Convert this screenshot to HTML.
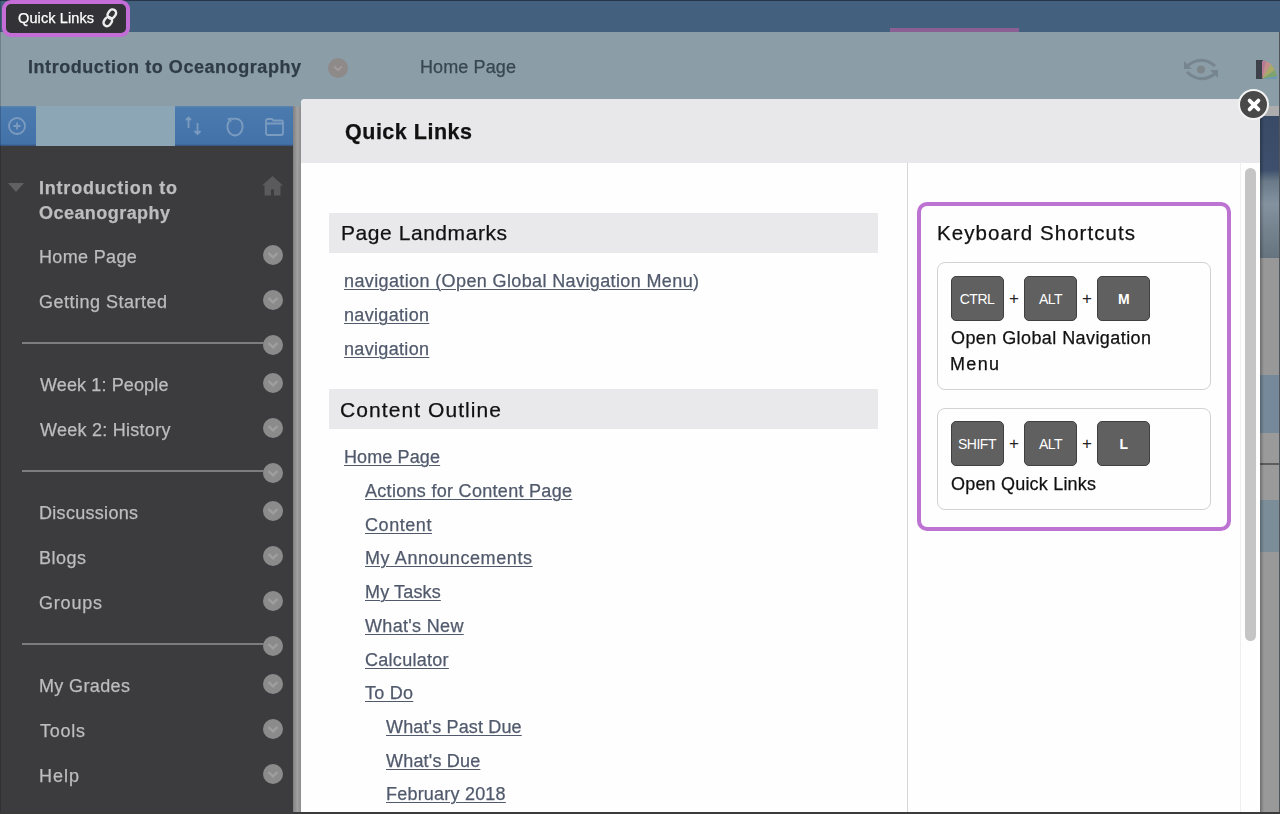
<!DOCTYPE html>
<html><head><meta charset="utf-8">
<style>
html,body{margin:0;padding:0;}
body{width:1280px;height:814px;overflow:hidden;position:relative;background:#8a9ba5;font-family:"Liberation Sans",sans-serif;}
.a{position:absolute;}
.t{position:absolute;white-space:nowrap;line-height:1;-webkit-text-stroke:0.25px currentColor;will-change:transform;}
.circ{position:absolute;width:20px;height:20px;border-radius:50%;background:#8b8b8b;}
.circ svg{position:absolute;left:0;top:0;}
.sep{position:absolute;left:22px;width:242px;height:2px;background:#7d7c7e;}
.key{position:absolute;width:51px;height:43px;background:#606060;border:1px solid #404040;border-radius:5px;color:#fff;font-size:14px;line-height:45px;text-align:center;letter-spacing:-0.5px;}
.plus{position:absolute;font-size:17px;color:#222;line-height:1;}
</style></head><body>
<!-- top bar -->
<div class="a" style="left:0;top:0;width:1280px;height:32px;background:#44607f;"></div>
<div class="a" style="left:0;top:0;width:1280px;height:1px;background:#26344a;"></div>
<div class="a" style="left:890px;top:28px;width:129px;height:4px;background:#8a5f93;"></div>
<!-- header -->
<div class="a" style="left:0;top:32px;width:1280px;height:74px;background:#8b9da7;"></div>
<!-- quick links button -->
<div class="a" style="left:2px;top:-0.5px;width:119.5px;height:29px;border:4.5px solid #c46dd6;border-radius:9px;background:#333236;"></div>
<svg class="a" style="left:100px;top:7px" width="20" height="22" viewBox="0 0 20 22">
  <g fill="none" stroke="#ececec" stroke-width="2.4">
    <rect x="8.2" y="2.2" width="7.2" height="9.6" rx="3.6" transform="rotate(35 11.8 7)"/>
    <rect x="4.2" y="9.8" width="7.2" height="9.6" rx="3.6" transform="rotate(35 7.8 14.6)"/>
  </g>
</svg>
<!-- header chevron -->
<div class="circ" style="left:328px;top:58px;background:#8f8a8a;filter:blur(0.6px);"><svg width="20" height="20" viewBox="0 0 20 20"><path d="M6 8.5 L10 12 L14 8.5" fill="none" stroke="#a29c9a" stroke-width="2"/></svg></div>
<!-- eye icon -->
<svg class="a" style="left:1183px;top:56px" width="36" height="27" viewBox="0 0 36 27">
  <g fill="none" stroke="#76858e" stroke-width="3">
    <path d="M3 11 Q18 -2 32 10"/>
    <path d="M4 16 Q18 29 33 17"/>
  </g>
  <path d="M1 5 L1 13 L9 13 Z" fill="#76858e"/>
  <path d="M35 22 L35 14 L27 14 Z" fill="#76858e"/>
  <circle cx="18" cy="13.5" r="4" fill="#7d878b"/>
</svg>
<!-- palette icon -->
<div class="a" style="left:1256px;top:60px;width:7px;height:19px;background:#3d424a;"></div>
<svg class="a" style="left:1262px;top:60px" width="16" height="19" viewBox="0 0 16 19">
  <path d="M0 19 L0 1 L4 1 Z" fill="#b77a92"/>
  <path d="M0 19 L4 1 L9 4 Z" fill="#c48f8a"/>
  <path d="M0 19 L9 4 L13 10 Z" fill="#a9a968"/>
  <path d="M0 19 L13 10 L15 16 Z" fill="#7fa36f"/>
  <path d="M0 19 L15 16 L15 19 Z" fill="#6e97b2"/>
</svg>
<!-- right strip -->
<div class="a" style="left:1260px;top:106px;width:20px;height:10px;background:#adadad;"></div>
<div class="a" style="left:1260px;top:116px;width:20px;height:142px;background:linear-gradient(#394a66,#3d4f6c 38%,#6a7a89 46%,#8492a0 62%,#75838f 80%,#65747f);"></div>
<div class="a" style="left:1260px;top:258px;width:20px;height:117px;background:#999899;"></div>
<div class="a" style="left:1260px;top:375px;width:20px;height:58px;background:#76899a;"></div>
<div class="a" style="left:1260px;top:433px;width:20px;height:67px;background:#9b9a9b;"></div>
<div class="a" style="left:1260px;top:463px;width:20px;height:1.5px;background:#5d5d5d;"></div>
<div class="a" style="left:1260px;top:500px;width:20px;height:52px;background:#7a8d99;"></div>
<div class="a" style="left:1260px;top:552px;width:20px;height:262px;background:#9a999a;"></div>
<div class="a" style="left:1260px;top:116px;width:4px;height:698px;background:linear-gradient(90deg,rgba(0,0,0,0.28),rgba(0,0,0,0));"></div>
<div class="a" style="left:1278.5px;top:32px;width:1.5px;height:782px;background:#50555b;"></div>
<!-- sidebar toolbar -->
<div class="a" style="left:0;top:106px;width:293px;height:40px;background:linear-gradient(#5f86b0 0,#4b7aaf 2px,#4372a9 38px,#34507a 40px);"></div>
<div class="a" style="left:36px;top:106px;width:139px;height:40px;background:#8ca6b5;"></div>
<svg class="a" style="left:6px;top:115px;filter:blur(0.6px)" width="22" height="22" viewBox="0 0 22 22">
  <circle cx="11" cy="11" r="8" fill="none" stroke="#7b9bbf" stroke-width="1.8"/>
  <path d="M11 7.5 V14.5 M7.5 11 H14.5" stroke="#7b9bbf" stroke-width="1.8"/>
</svg>
<svg class="a" style="left:184px;top:115px;filter:blur(0.6px)" width="20" height="22" viewBox="0 0 20 22">
  <g fill="none" stroke="#7b9bbf" stroke-width="1.8">
    <path d="M4.5 13 V2.5 M2 5 L4.5 2.5 L7 5"/>
    <path d="M13.5 8 V19 M10.5 16 L13.5 19 L16.5 16"/>
  </g>
</svg>
<svg class="a" style="left:224px;top:116px;filter:blur(0.6px)" width="22" height="22" viewBox="0 0 22 22">
  <path d="M5 5 Q3 9 3.5 12 Q5 19 11 19.5 Q17 19 18.5 12 Q19 6 15 3.5 Q11 2 8 3" fill="none" stroke="#7b9bbf" stroke-width="1.9"/>
  <path d="M3 2.5 L8 1.5 L7 6.5 Z" fill="#7b9bbf"/>
</svg>
<svg class="a" style="left:263px;top:116px;filter:blur(0.6px)" width="22" height="22" viewBox="0 0 22 22">
  <path d="M3 5 Q3 3 5 3 H9 L10.5 4.5 H18 Q20 4.5 20 6.5 V17 Q20 19 18 19 H5 Q3 19 3 17 Z M3 7.5 H20" fill="none" stroke="#7b9bbf" stroke-width="1.8"/>
</svg>
<!-- sidebar -->
<div class="a" style="left:0;top:146px;width:293px;height:668px;background:#3c3b3e;"></div>
<div class="a" style="left:293px;top:106px;width:8px;height:708px;background:linear-gradient(90deg,#828182,#a2a1a2 55%,#8c8b8c);"></div>
<svg class="a" style="left:8px;top:183px" width="16" height="9" viewBox="0 0 16 9"><path d="M0 0 H16 L8 9 Z" fill="#616063"/></svg>
<svg class="a" style="left:261px;top:175px;filter:blur(0.4px)" width="23" height="22" viewBox="0 0 23 22"><path d="M11.5 1 L22 10.5 H19.5 V20.5 H13 V14.5 H10 V20.5 H3.5 V10.5 H1 Z" fill="#5a595c"/></svg>
<div class="circ" style="left:263px;top:245px;"><svg width="20" height="20" viewBox="0 0 20 20"><path d="M5.5 8 L10 12.3 L14.5 8" fill="none" stroke="#9f9f9f" stroke-width="2.3"/></svg></div>
<div class="circ" style="left:263px;top:290px;"><svg width="20" height="20" viewBox="0 0 20 20"><path d="M5.5 8 L10 12.3 L14.5 8" fill="none" stroke="#9f9f9f" stroke-width="2.3"/></svg></div>
<div class="circ" style="left:263px;top:335px;"><svg width="20" height="20" viewBox="0 0 20 20"><path d="M5.5 8 L10 12.3 L14.5 8" fill="none" stroke="#9f9f9f" stroke-width="2.3"/></svg></div>
<div class="circ" style="left:263px;top:373px;"><svg width="20" height="20" viewBox="0 0 20 20"><path d="M5.5 8 L10 12.3 L14.5 8" fill="none" stroke="#9f9f9f" stroke-width="2.3"/></svg></div>
<div class="circ" style="left:263px;top:418px;"><svg width="20" height="20" viewBox="0 0 20 20"><path d="M5.5 8 L10 12.3 L14.5 8" fill="none" stroke="#9f9f9f" stroke-width="2.3"/></svg></div>
<div class="circ" style="left:263px;top:463px;"><svg width="20" height="20" viewBox="0 0 20 20"><path d="M5.5 8 L10 12.3 L14.5 8" fill="none" stroke="#9f9f9f" stroke-width="2.3"/></svg></div>
<div class="circ" style="left:263px;top:501px;"><svg width="20" height="20" viewBox="0 0 20 20"><path d="M5.5 8 L10 12.3 L14.5 8" fill="none" stroke="#9f9f9f" stroke-width="2.3"/></svg></div>
<div class="circ" style="left:263px;top:546px;"><svg width="20" height="20" viewBox="0 0 20 20"><path d="M5.5 8 L10 12.3 L14.5 8" fill="none" stroke="#9f9f9f" stroke-width="2.3"/></svg></div>
<div class="circ" style="left:263px;top:591px;"><svg width="20" height="20" viewBox="0 0 20 20"><path d="M5.5 8 L10 12.3 L14.5 8" fill="none" stroke="#9f9f9f" stroke-width="2.3"/></svg></div>
<div class="circ" style="left:263px;top:636px;"><svg width="20" height="20" viewBox="0 0 20 20"><path d="M5.5 8 L10 12.3 L14.5 8" fill="none" stroke="#9f9f9f" stroke-width="2.3"/></svg></div>
<div class="circ" style="left:263px;top:674px;"><svg width="20" height="20" viewBox="0 0 20 20"><path d="M5.5 8 L10 12.3 L14.5 8" fill="none" stroke="#9f9f9f" stroke-width="2.3"/></svg></div>
<div class="circ" style="left:263px;top:719px;"><svg width="20" height="20" viewBox="0 0 20 20"><path d="M5.5 8 L10 12.3 L14.5 8" fill="none" stroke="#9f9f9f" stroke-width="2.3"/></svg></div>
<div class="circ" style="left:263px;top:764px;"><svg width="20" height="20" viewBox="0 0 20 20"><path d="M5.5 8 L10 12.3 L14.5 8" fill="none" stroke="#9f9f9f" stroke-width="2.3"/></svg></div>
<div class="sep" style="top:342px;"></div>
<div class="sep" style="top:470px;"></div>
<div class="sep" style="top:643px;"></div>
<!-- modal -->
<div class="a" style="left:301px;top:98.5px;width:959px;height:716px;background:#fefefe;border-radius:4px 4px 0 0;overflow:hidden;">
  <div class="a" style="left:0;top:0;width:959px;height:64.3px;background:#e8e7e9;"></div>
</div>
<div class="a" style="left:329px;top:213px;width:549px;height:40px;background:#e9e8ea;"></div>
<div class="a" style="left:329px;top:389px;width:549px;height:40px;background:#e9e8ea;"></div>
<div class="a" style="left:907px;top:162.8px;width:1px;height:652px;background:#d6d6d6;"></div>
<div class="a" style="left:1240px;top:162px;width:1px;height:652px;background:#efefef;"></div>
<div class="a" style="left:1245px;top:168px;width:11px;height:473px;background:#c6c5c6;border-radius:6px;"></div>
<!-- keyboard box -->
<div class="a" style="left:917px;top:202px;width:305.5px;height:321px;border:4.5px solid #bd73d2;border-radius:10px;"></div>
<div class="a" style="left:937px;top:262px;width:272px;height:126px;border:1px solid #d2d2d2;border-radius:8px;"></div>
<div class="a" style="left:937px;top:407.5px;width:272px;height:100.5px;border:1px solid #d2d2d2;border-radius:8px;"></div>
<div class="key" style="left:950.5px;top:276px;">CTRL</div>
<div class="key" style="left:1024px;top:276px;">ALT</div>
<div class="key" style="left:1097px;top:276px;font-weight:bold;">M</div>
<div class="plus" style="left:1009px;top:290px;">+</div>
<div class="plus" style="left:1082px;top:290px;">+</div>
<div class="key" style="left:950.5px;top:421px;">SHIFT</div>
<div class="key" style="left:1024px;top:421px;">ALT</div>
<div class="key" style="left:1097px;top:421px;font-weight:bold;">L</div>
<div class="plus" style="left:1009px;top:435px;">+</div>
<div class="plus" style="left:1082px;top:435px;">+</div>
<!-- close -->
<div class="a" style="left:1238px;top:89px;width:27px;height:27px;border:2.5px solid #f4f4f4;border-radius:50%;background:#4a494a;"></div>
<svg class="a" style="left:1244.5px;top:96px" width="18" height="18" viewBox="0 0 18 18"><path d="M4.6 4.6 L13.4 13.4 M13.4 4.6 L4.6 13.4" stroke="#fff" stroke-width="3.8" stroke-linecap="round"/></svg>
<div class="a" style="left:0;top:0;width:1px;height:814px;background:rgba(0,0,0,0.18);"></div>
<!-- bottom line -->
<div class="a" style="left:0;top:812px;width:1280px;height:2px;background:#3b3b3b;"></div>
<div class="t" style="left:18.00px;top:11.23px;font-size:14.5px;font-weight:normal;color:#ffffff;letter-spacing:0.106px;">Quick Links</div>
<div class="t" style="left:28.00px;top:57.76px;font-size:18px;font-weight:bold;color:#2f3c48;letter-spacing:0.555px;">Introduction to Oceanography</div>
<div class="t" style="left:420.00px;top:57.76px;font-size:18px;font-weight:normal;color:#37464f;letter-spacing:0.118px;">Home Page</div>
<div class="t" style="left:345.00px;top:121.50px;font-size:21.5px;font-weight:bold;color:#111111;letter-spacing:0.513px;">Quick Links</div>
<div class="t" style="left:341.00px;top:222.22px;font-size:21px;font-weight:normal;color:#111111;letter-spacing:0.557px;">Page Landmarks</div>
<div class="t" style="left:344.00px;top:271.56px;font-size:18px;font-weight:normal;color:#515a6c;letter-spacing:0.380px;"><span style="text-decoration:underline;text-underline-offset:2px;text-decoration-thickness:1px;">navigation (Open Global Navigation Menu</span>)</div>
<div class="t" style="left:344.00px;top:305.76px;font-size:18px;font-weight:normal;color:#515a6c;letter-spacing:0.326px;text-decoration:underline;text-underline-offset:2px;text-decoration-thickness:1px;">navigation</div>
<div class="t" style="left:344.00px;top:339.96px;font-size:18px;font-weight:normal;color:#515a6c;letter-spacing:0.326px;text-decoration:underline;text-underline-offset:2px;text-decoration-thickness:1px;">navigation</div>
<div class="t" style="left:340.00px;top:399.02px;font-size:21px;font-weight:normal;color:#111111;letter-spacing:1.077px;">Content Outline</div>
<div class="t" style="left:344.00px;top:448.36px;font-size:18px;font-weight:normal;color:#515a6c;letter-spacing:0.118px;text-decoration:underline;text-underline-offset:2px;text-decoration-thickness:1px;">Home Page</div>
<div class="t" style="left:365.00px;top:482.07px;font-size:18px;font-weight:normal;color:#515a6c;letter-spacing:0.299px;text-decoration:underline;text-underline-offset:2px;text-decoration-thickness:1px;">Actions for Content Page</div>
<div class="t" style="left:365.00px;top:515.78px;font-size:18px;font-weight:normal;color:#515a6c;letter-spacing:0.559px;text-decoration:underline;text-underline-offset:2px;text-decoration-thickness:1px;">Content</div>
<div class="t" style="left:365.00px;top:549.49px;font-size:18px;font-weight:normal;color:#515a6c;letter-spacing:0.595px;text-decoration:underline;text-underline-offset:2px;text-decoration-thickness:1px;">My Announcements</div>
<div class="t" style="left:365.00px;top:583.20px;font-size:18px;font-weight:normal;color:#515a6c;letter-spacing:0.142px;text-decoration:underline;text-underline-offset:2px;text-decoration-thickness:1px;">My Tasks</div>
<div class="t" style="left:365.00px;top:616.91px;font-size:18px;font-weight:normal;color:#515a6c;letter-spacing:0.327px;text-decoration:underline;text-underline-offset:2px;text-decoration-thickness:1px;">What's New</div>
<div class="t" style="left:365.00px;top:650.62px;font-size:18px;font-weight:normal;color:#515a6c;letter-spacing:0.285px;text-decoration:underline;text-underline-offset:2px;text-decoration-thickness:1px;">Calculator</div>
<div class="t" style="left:365.00px;top:684.33px;font-size:18px;font-weight:normal;color:#515a6c;letter-spacing:0.245px;text-decoration:underline;text-underline-offset:2px;text-decoration-thickness:1px;">To Do</div>
<div class="t" style="left:385.80px;top:718.04px;font-size:18px;font-weight:normal;color:#515a6c;letter-spacing:0.151px;text-decoration:underline;text-underline-offset:2px;text-decoration-thickness:1px;">What's Past Due</div>
<div class="t" style="left:385.80px;top:751.75px;font-size:18px;font-weight:normal;color:#515a6c;letter-spacing:0.192px;text-decoration:underline;text-underline-offset:2px;text-decoration-thickness:1px;">What's Due</div>
<div class="t" style="left:385.80px;top:785.46px;font-size:18px;font-weight:normal;color:#515a6c;letter-spacing:0.211px;text-decoration:underline;text-underline-offset:2px;text-decoration-thickness:1px;">February 2018</div>
<div class="t" style="left:936.80px;top:222.65px;font-size:20.5px;font-weight:normal;color:#111111;letter-spacing:1.056px;">Keyboard Shortcuts</div>
<div class="t" style="left:951.00px;top:329.26px;font-size:18px;font-weight:normal;color:#111111;letter-spacing:0.423px;">Open Global Navigation</div>
<div class="t" style="left:950.00px;top:354.76px;font-size:18px;font-weight:normal;color:#111111;letter-spacing:1.325px;">Menu</div>
<div class="t" style="left:951.00px;top:474.76px;font-size:18px;font-weight:normal;color:#111111;letter-spacing:0.196px;">Open Quick Links</div>
<div class="t" style="left:39.00px;top:178.96px;font-size:18px;font-weight:bold;color:#bdbdbd;letter-spacing:0.788px;">Introduction to</div>
<div class="t" style="left:39.00px;top:203.76px;font-size:18px;font-weight:bold;color:#bdbdbd;letter-spacing:0.451px;">Oceanography</div>
<div class="t" style="left:39.00px;top:248.06px;font-size:18px;font-weight:normal;color:#bdbdbd;letter-spacing:0.343px;">Home Page</div>
<div class="t" style="left:39.00px;top:292.76px;font-size:18px;font-weight:normal;color:#bdbdbd;letter-spacing:0.495px;">Getting Started</div>
<div class="t" style="left:40.00px;top:375.96px;font-size:18px;font-weight:normal;color:#bdbdbd;letter-spacing:0.127px;">Week 1: People</div>
<div class="t" style="left:40.00px;top:420.96px;font-size:18px;font-weight:normal;color:#bdbdbd;letter-spacing:0.264px;">Week 2: History</div>
<div class="t" style="left:39.00px;top:504.16px;font-size:18px;font-weight:normal;color:#bdbdbd;letter-spacing:0.297px;">Discussions</div>
<div class="t" style="left:39.00px;top:548.76px;font-size:18px;font-weight:normal;color:#bdbdbd;letter-spacing:0.493px;">Blogs</div>
<div class="t" style="left:39.00px;top:593.76px;font-size:18px;font-weight:normal;color:#bdbdbd;letter-spacing:0.795px;">Groups</div>
<div class="t" style="left:39.00px;top:676.76px;font-size:18px;font-weight:normal;color:#bdbdbd;letter-spacing:0.372px;">My Grades</div>
<div class="t" style="left:40.00px;top:721.76px;font-size:18px;font-weight:normal;color:#bdbdbd;letter-spacing:0.745px;">Tools</div>
<div class="t" style="left:39.00px;top:766.76px;font-size:18px;font-weight:normal;color:#bdbdbd;letter-spacing:0.993px;">Help</div>
</body></html>
